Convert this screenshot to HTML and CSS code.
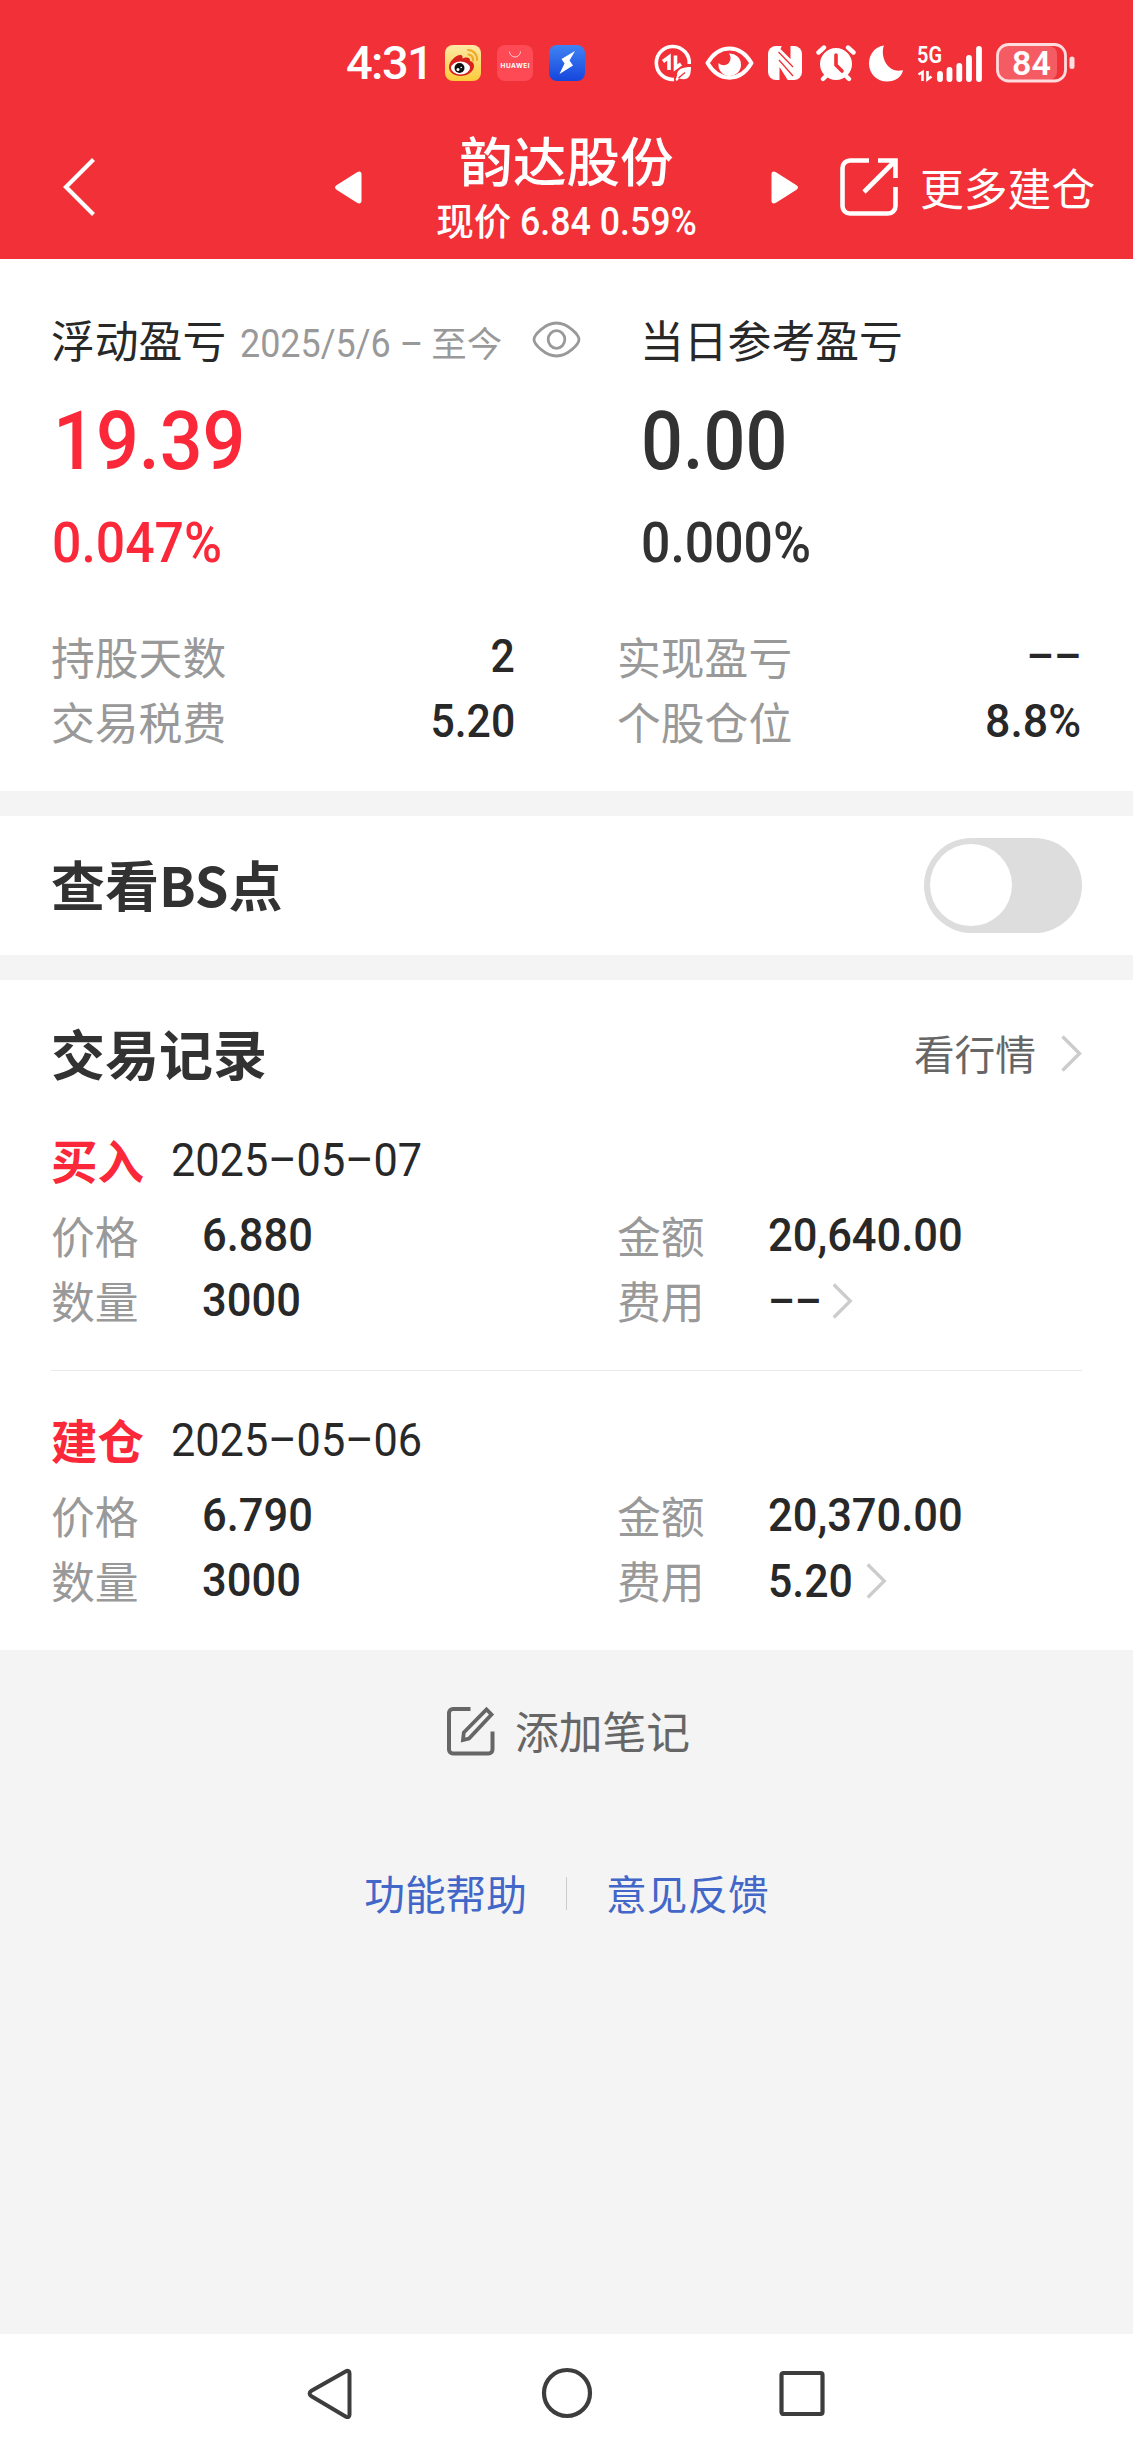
FILE: index.html
```html
<!DOCTYPE html>
<html lang="zh-CN">
<head>
<meta charset="utf-8">
<title>韵达股份</title>
<link rel="stylesheet" href="styles.css">
</head>
<body>
<div class="app">
  <header class="header">
    <div class="status">
      <span class="clock">4:31</span>
      <div class="app-icons">
        <svg width="36" height="36" viewBox="0 0 36 36"><defs><linearGradient id="wb" x1="0" y1="0" x2="0" y2="1"><stop offset="0" stop-color="#fde9a6"/><stop offset="1" stop-color="#fdcb3a"/></linearGradient></defs><rect width="36" height="36" rx="8" fill="url(#wb)"/><path d="M4 22c0-6 8-13 12-12 2 .6 1.600 3 1.400 3.600 3-1.600 8-2 7.600 2.400 2 .6 4 2 4 5C29 27 22 31 15.500 31 9 31 4 27.500 4 22z" fill="#d8201f"/><ellipse cx="15.500" cy="23" rx="9.500" ry="6.500" fill="#fff"/><circle cx="14.500" cy="23" r="5" fill="#111"/><circle cx="13" cy="24.500" r="1.500" fill="#fff"/><circle cx="16.200" cy="22.500" r=".8" fill="#fff"/><path d="M23.500 9.500a5 5 0 0 1 4.500 6M23 5a9 9 0 0 1 9 10" fill="none" stroke="#eea92c" stroke-width="2.200" stroke-linecap="round"/></svg>
        <svg width="36" height="36" viewBox="0 0 36 36"><rect width="36" height="36" rx="8" fill="#fd4a55"/><path d="M12.500 6.500a5.500 5.500 0 0 0 11 0" fill="none" stroke="#ffc9cc" stroke-width="1"/><text x="18" y="23.200" class="tiny" text-anchor="middle" textLength="29">HUAWEI</text></svg>
        <svg width="36" height="36" viewBox="0 0 36 36"><defs><linearGradient id="bl" x1="0" y1="0" x2="0" y2="1"><stop offset="0" stop-color="#3f83f3"/><stop offset="1" stop-color="#1546dc"/></linearGradient></defs><rect width="36" height="36" rx="8" fill="url(#bl)"/><path d="M26 6L12.500 14l3 4.500-5 10.500L24 20.500l-3.500-5z" fill="#fff"/></svg>
      </div>
      <div class="sys-icons">
        <svg class="i-data" width="38" height="38" viewBox="0 0 38 38"><path d="M20 35.400A16.500 16.500 0 1 1 35.300 20" fill="none" stroke="#fff" stroke-width="3.600"/><path d="M9 17.500l6-4.500V26M21.500 11.500V24l5.500-4" fill="none" stroke="#fff" stroke-width="3.600"/><path d="M37 23c-8 0-14.500 2-14 8.500L21.500 36l1.500 1 2-2.500C34 37 37 33 37 23z" fill="#fff"/><path d="M24.500 34l6.500-5.500" stroke="#f13037" stroke-width="1.400"/></svg>
        <svg class="i-eye" width="49" height="34" viewBox="0 0 49 34"><path d="M2.500 17C14-2.500 35-2.500 46.500 17 35 36.500 14 36.500 2.500 17z" fill="none" stroke="#fff" stroke-width="4" stroke-linejoin="round"/><path d="M24 7.500A11.300 11.300 0 1 1 13.600 17c3 3 8 3 10.500-.5 2-3 2-6-.1-9z" fill="#fff"/></svg>
        <svg class="i-nfc" width="34" height="36" viewBox="0 0 34 36"><rect y="1" width="34" height="34" rx="8" fill="#fff"/><path d="M14 .5h8.500V14L12.500 4zM11.500 22L20 35.500h-8.500z" fill="#f13037"/><path d="M10.500 7L25 22M11 15l14 16" fill="none" stroke="#f13037" stroke-width="1.300"/></svg>
        <svg class="i-alarm" width="40" height="38" viewBox="0 0 40 38"><path d="M2.500 8.500L8 3.500M37.500 8.500L32 3.500M7 35l4-4M33 35l-4-4" stroke="#fff" stroke-width="4.400" stroke-linecap="round"/><circle cx="20" cy="20" r="16" fill="#fff"/><path d="M20 11v10l6 6" fill="none" stroke="#f13037" stroke-width="3.600" stroke-linecap="round"/></svg>
        <svg class="i-moon" width="35" height="37" viewBox="0 0 35 37"><path d="M15 .5C5 2 0 10 0 18.500 0 29 8 36.500 18 36.500c8 0 15-4.500 16-11.500-3 1-10 1.500-15-4S12.500 6 15 .5z" fill="#fff"/></svg>
        <svg class="i-signal" width="66" height="42" viewBox="0 -3 66 42"><text x="0" y="18" class="five-g" textLength="25" lengthAdjust="spacingAndGlyphs">5G</text><path d="M1.500 29.500l4-2.500v9M10.500 26v8.500l4-3" fill="none" stroke="#fff" stroke-width="2.600"/><g stroke="#fff" stroke-width="5.800" stroke-linecap="round"><path d="M23 29v5M32.500 25v9M42.300 21v13M52 13v21M62 4v30"/></g></svg>
        <svg class="i-batt" width="80" height="40" viewBox="0 0 80 40"><rect x="3" y="3" width="58" height="34" rx="8" fill="#f55b62"/><rect x="1.500" y="1.500" width="68" height="36.500" rx="11" fill="none" stroke="#ffdcde" stroke-width="2.800"/><rect x="73.500" y="13.500" width="5" height="12.500" rx="2.500" fill="#ffdcde"/><text x="35.500" y="31.600" class="batt" text-anchor="middle">84</text></svg>
      </div>
    </div>
    <div class="titlebar">
      <svg class="back" width="33" height="60" viewBox="0 0 33 60"><path d="M30.500 2.500L3 30l27.500 27.500" fill="none" stroke="#fff" stroke-width="4.200"/></svg>
      <svg class="prev" width="27" height="33" viewBox="0 0 27 33"><path d="M1.500 14.300L22 1.200c2.500-1.600 4.500-.5 4.500 2v26.600c0 2.500-2 3.600-4.500 2L1.500 18.700c-2-1.400-2-3 0-4.400z" fill="#fff"/></svg>
      <div class="title">
        <h1>韵达股份</h1>
        <p>现价 <span class="price">6.84 0.59%</span></p>
      </div>
      <svg class="next" width="27" height="33" viewBox="0 0 27 33"><path d="M25.500 14.300L5 1.200C2.500-.4.500.7.500 3.200v26.600c0 2.500 2 3.600 4.500 2l20.500-13.100c2-1.400 2-3 0-4.400z" fill="#fff"/></svg>
      <svg class="open" width="58" height="58" viewBox="0 0 58 58"><path d="M29 2.500H10A7.500 7.500 0 0 0 2.500 10v38a7.500 7.500 0 0 0 7.500 7.500h38a7.500 7.500 0 0 0 7.500-7.500V29M38 2.500h17.500V20M55.500 2.500L24 34" fill="none" stroke="#fff" stroke-width="4.600"/></svg>
      <span class="more">更多建仓</span>
    </div>
  </header>

  <section class="summary">
    <div class="pnl">
      <div class="pnl-col">
        <div class="pnl-label"><span>浮动盈亏</span><span class="range"><span class="num">2025/5/6 –</span> 至今</span>
          <svg class="eye" width="49" height="37" viewBox="0 0 49 37"><path d="M2 18.500C2 14 13 2 24.500 2S47 14 47 18.500 36 35 24.500 35 2 23 2 18.500z" fill="none" stroke="#999" stroke-width="2.800"/><ellipse cx="24.500" cy="18.500" rx="8.300" ry="8.800" fill="none" stroke="#999" stroke-width="2.800"/></svg>
        </div>
        <div class="big red num">19.39</div>
        <div class="pct red num">0.047%</div>
      </div>
      <div class="pnl-col">
        <div class="pnl-label"><span>当日参考盈亏</span></div>
        <div class="big num">0.00</div>
        <div class="pct num">0.000%</div>
      </div>
    </div>
    <div class="stats">
      <div class="stat"><span class="key">持股天数</span><span class="val num">2</span></div>
      <div class="stat"><span class="key">实现盈亏</span><span class="val num">––</span></div>
      <div class="stat"><span class="key">交易税费</span><span class="val num">5.20</span></div>
      <div class="stat"><span class="key">个股仓位</span><span class="val num percent">8.8%</span></div>
    </div>
  </section>

  <section class="bs">
    <h2>查看BS点</h2>
    <div class="toggle"><div class="knob"></div></div>
  </section>

  <section class="records">
    <div class="rec-head">
      <h2>交易记录</h2>
      <span class="quote">看行情</span>
      <svg class="chev" width="21" height="37" viewBox="0 0 21 37"><path d="M1.500 1.500l17 17-17 17" fill="none" stroke="#ccc" stroke-width="3.400"/></svg>
    </div>
    <article class="rec">
      <div class="rec-title"><strong>买入</strong><span class="num date">2025–05–07</span></div>
      <div class="grid">
        <span class="key">价格</span><span class="num">6.880</span><span class="key">金额</span><span class="num">20,640.00</span>
        <span class="key">数量</span><span class="num">3000</span><span class="key">费用</span><span class="fee"><span class="num dashes">––</span><svg width="21" height="36" viewBox="0 0 21 37"><path d="M1.500 1.500l17 17-17 17" fill="none" stroke="#ccc" stroke-width="3.400"/></svg></span>
      </div>
    </article>
    <article class="rec">
      <div class="rec-title"><strong>建仓</strong><span class="num date">2025–05–06</span></div>
      <div class="grid">
        <span class="key">价格</span><span class="num">6.790</span><span class="key">金额</span><span class="num">20,370.00</span>
        <span class="key">数量</span><span class="num">3000</span><span class="key">费用</span><span class="fee"><span class="num amount">5.20</span><svg width="21" height="36" viewBox="0 0 21 37"><path d="M1.500 1.500l17 17-17 17" fill="none" stroke="#ccc" stroke-width="3.400"/></svg></span>
      </div>
    </article>
  </section>

  <div class="note">
    <svg width="49" height="50" viewBox="0 0 49 50"><path d="M24.500 3H7a4 4 0 0 0-4 4v36.500a4 4 0 0 0 4 4h35.500a4 4 0 0 0 4-4V25.500" fill="none" stroke="#666" stroke-width="4"/><path d="M17 34l.8-7.500L40.500 3.500l5 5L23 32.500z" fill="none" stroke="#666" stroke-width="3.800"/></svg>
    <span>添加笔记</span>
  </div>
  <div class="links"><a>功能帮助</a><i></i><a>意见反馈</a></div>

  <nav class="nav">
    <svg width="52" height="52" viewBox="0 0 52 52"><path d="M6.500 23.700L41 4.300c1.800-1 3.500-.3 3.500 2v41.400c0 2.300-1.700 3-3.500 2L6.500 29.300c-2.500-1.500-2.500-4.100 0-5.600z" fill="none" stroke="#3d3d3d" stroke-width="4"/></svg>
    <svg width="52" height="52" viewBox="0 0 52 52"><circle cx="26" cy="26" r="23" fill="none" stroke="#3d3d3d" stroke-width="4.200"/></svg>
    <svg width="52" height="52" viewBox="0 0 52 52"><rect x="4.500" y="6" width="41" height="41" rx="2" fill="none" stroke="#3d3d3d" stroke-width="4.200"/></svg>
  </nav>
</div>
</body>
</html>
```
FILE: styles.css
```css
* { box-sizing: border-box; margin: 0; padding: 0; }
body { background: #f4f4f4; }
svg { display: block; flex: none; }
.app {
  width: 1133px; height: 2453px;
  display: flex; flex-direction: column;
  font-family: "Noto Sans CJK SC", sans-serif;
  font-size: 43.8px; line-height: 60px; color: #282828;
  white-space: nowrap;
}
.num { font-family: Roboto, sans-serif; transform: scaleX(.925); transform-origin: left center; }

.header { height: 259px; background: #f13037; color: #fff; }
.status { display: flex; align-items: center; height: 126px; padding-left: 346px; }
.clock { width: 99px; font: 500 47px/60px Roboto, sans-serif; letter-spacing: -1.6px; }
.app-icons { display: flex; gap: 16px; }
.sys-icons { display: flex; align-items: center; margin-left: 69px; }
.i-eye { margin-left: 13px; }
.i-nfc { margin-left: 14px; }
.i-alarm { margin-left: 14px; }
.i-moon { margin-left: 13px; }
.i-signal { margin-left: 13px; }
.i-batt { margin-left: 13px; }
.tiny { font: 700 6.5px Inter, sans-serif; fill: #fff; }
.five-g { font: 600 23.500px/1 Roboto, sans-serif; fill: #fff; }
.batt { font: 600 34px Roboto, sans-serif; fill: #fff; }

.titlebar { display: flex; align-items: center; height: 122px; padding-left: 63px; }
.prev { margin-left: 239px; }
.title { width: 409px; text-align: center; }
.title h1 { font-size: 53.500px; font-weight: 500; line-height: 66px; margin-top: 1px; }
.title p { font-size: 37.500px; line-height: 54px; font-weight: 500; }
.price { display: inline-block; font-family: Roboto, sans-serif; font-size: 38px; transform: scaleX(.94); transform-origin: left; margin-right: -11px; }
.open { margin-left: 42px; }
.more { margin-left: 22px; margin-top: -1px; }

.summary { height: 532px; background: #fff; padding: 49px 52px 0 51px; }
.pnl { display: grid; grid-template-columns: 589px 1fr; }
.pnl-label { display: flex; align-items: center; height: 62px; }
.range { display: flex; width: 292px; margin-left: 14px; font-size: 35.500px; color: #999; padding-top: 7px; }
.range .num { font-size: 38px; width: 191px; padding-top: 2px; transform: scaleX(.945); }
.big { height: 124px; margin-top: 9px; margin-left: 1px; font-size: 82px; font-weight: 500; line-height: 125px; color: #323232; transform: scaleX(.9); }
.big.red { margin-left: 2px; transform: scaleX(.92); }
.pct { height: 80px; margin-left: 1px; font-size: 55px; font-weight: 500; line-height: 81px; color: #323232; transform: scaleX(.94); }
.pnl .red { color: #fb2839; }
.stats { display: grid; grid-template-columns: 464px 464px; column-gap: 102px; grid-auto-rows: 65px; margin-top: 41px; }
.stat { display: flex; justify-content: space-between; line-height: 65px; }
.key { color: #999; }
.stat .val { font-size: 47px; font-weight: 500; transform: scaleX(.91); transform-origin: right center; line-height: 64px; }
.stat .percent { transform: scaleX(.95); }

.bs { display: flex; align-items: center; justify-content: space-between; height: 139px; margin-top: 25px; background: #fff; padding: 0 51px; }
h2 { margin-top: -3px; font-size: 54px; font-weight: 700; color: #323232; }
.toggle { width: 158px; height: 95px; border-radius: 48px; background: #ddd; padding: 6px; }
.knob { width: 82px; height: 82px; border-radius: 50%; background: #fff; }

.records { height: 670px; margin-top: 25px; background: #fff; padding: 30px 51px 0; }
.rec-head { display: flex; align-items: center; height: 88px; }
.quote { margin-left: auto; margin-top: -2px; font-size: 40.700px; color: #666; }
.chev { margin-left: 25px; margin-top: -1px; }
.rec { height: 272px; }
.rec + .rec { height: 280px; border-top: 1px solid #eaeaea; padding-top: 7px; }
.rec-title { display: flex; align-items: center; height: 105px; padding-top: 16px; }
.rec-title strong { width: 120px; font-size: 46.500px; font-weight: 700; color: #fb2839; }
.date { font-size: 47px; padding-top: 2px; }
.rec-title .date { transform: scaleX(.92); }
.grid { display: grid; grid-template-columns: 151px 415px 151px 1fr; grid-auto-rows: 65px; line-height: 65px; }
.grid .num { font-size: 47px; font-weight: 500; line-height: 64px; }
.fee { display: flex; align-items: center; }
.grid .dashes { width: 64px; line-height: 65px; transform: scaleX(.89); }
.grid .amount { width: 98px; line-height: 63px; transform: scaleX(.91); margin-top: -1px; }

.note { display: flex; align-items: center; justify-content: center; gap: 20px; height: 100px; margin-top: 30px; padding-left: 3px; color: #666; }
.note svg { margin-top: 2px; }
.links { display: flex; align-items: center; justify-content: center; gap: 39px; height: 60px; margin-top: 83px; font-size: 40.700px; color: #4267c8; }
.links i { width: 1px; height: 33px; background: #ccc; }
.nav { display: flex; align-items: flex-start; justify-content: center; gap: 184px; height: 119px; margin-top: auto; background: #fff; padding-top: 33px; }
```
